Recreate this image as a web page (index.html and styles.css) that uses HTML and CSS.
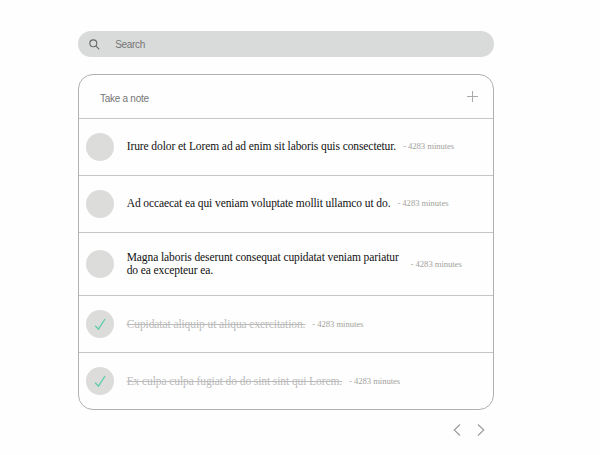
FILE: index.html
```html
<!DOCTYPE html>
<html lang="en">
<head>
<meta charset="utf-8">
<title>Notes</title>
<link rel="stylesheet" href="styles.css">
</head>
<body>
<main class="app">
  <div class="search">
    <svg class="search-icon" viewBox="0 0 12 12"><circle cx="4.7" cy="4.7" r="3.8"/><path d="M7.5 7.5L11.2 11.2"/></svg>
    <span>Search</span>
  </div>
  <section class="card">
    <div class="new-note"><span>Take a note</span><svg class="plus" viewBox="0 0 11 11"><path d="M5.5 0v11M0 5.5h11"/></svg></div>
    <div class="note"><span class="check"></span><p class="text">Irure dolor et Lorem ad ad enim sit laboris quis consectetur.</p><span class="time">- 4283 minutes</span></div>
    <div class="note"><span class="check"></span><p class="text">Ad occaecat ea qui veniam voluptate mollit ullamco ut do.</p><span class="time">- 4283 minutes</span></div>
    <div class="note tall"><span class="check"></span><p class="text">Magna laboris deserunt consequat cupidatat veniam pariatur do ea excepteur ea.</p><span class="time">- 4283 minutes</span></div>
    <div class="note done"><span class="check"><svg viewBox="0 0 12 14"><path d="M1.2 8.8l3.3 3.4L11 2"/></svg></span><p class="text">Cupidatat aliquip ut aliqua exercitation.</p><span class="time">- 4283 minutes</span></div>
    <div class="note done"><span class="check"><svg viewBox="0 0 12 14"><path d="M1.2 8.8l3.3 3.4L11 2"/></svg></span><p class="text">Ex culpa culpa fugiat do do sint sint qui Lorem.</p><span class="time">- 4283 minutes</span></div>
  </section>
  <nav class="pager">
    <svg viewBox="0 0 8 12"><path d="M7 .5L1.2 6 7 11.5"/></svg>
    <svg viewBox="0 0 8 12"><path d="M1 .5L6.8 6 1 11.5"/></svg>
  </nav>
</main>
</body>
</html>
```
FILE: styles.css
```css
* { box-sizing: border-box; }
body { margin: 0; background: #fefefe; font-family: "Liberation Serif", serif; }
svg { fill: none; stroke: #999; display: block; }
.app { width: 416px; padding-top: 31px; margin-left: 77.7px; }
.search { height: 26px; border-radius: 13px; background: #d9dbda; display: flex; align-items: center; padding-left: 11px; gap: 15.5px; font: 10px "Liberation Sans", sans-serif; letter-spacing: -.3px; color: #757575; }
.search-icon { width: 11px; height: 11px; stroke: #666; stroke-width: 1.2; }
.card { margin-top: 17px; border: 1px solid #b0b0b0; border-radius: 15px; height: 336px; }
.new-note { height: 43px; display: flex; justify-content: space-between; padding: 0 15px 0 21.4px; font: 10px "Liberation Sans", sans-serif; letter-spacing: -.28px; color: #757575; }
.new-note span { margin-top: 18px; }
.plus { width: 11px; height: 11px; margin-top: 16px; stroke: #aaa; }
.note { height: 57px; border-top: 1px solid #c6c6c6; display: flex; align-items: center; padding-left: 7px; }
.tall { height: 63px; }
.check { width: 28px; height: 28px; border-radius: 50%; background: #dcdcda; display: grid; place-items: center; flex: none; }
.check svg { width: 12px; height: 14px; stroke: #5eccad; stroke-width: 1.3; margin-left: 1px; }
.text { margin: -1px 7px 0 13px; font-size: 11.5px; line-height: 13px; letter-spacing: -.09px; color: #111; max-width: 277px; }
.time { font-size: 8.7px; letter-spacing: -.08px; color: #a3a39d; white-space: nowrap; margin-top: -2px; }
.tall .text, .tall .time, .done .text, .done .time { margin-top: 0; }
.done .text { color: #bbb; text-decoration: line-through; }
.pager { display: flex; justify-content: flex-end; gap: 16px; padding: 14px 9px 0 0; }
.pager svg { width: 8px; height: 12px; stroke-width: 1.1; }
```
